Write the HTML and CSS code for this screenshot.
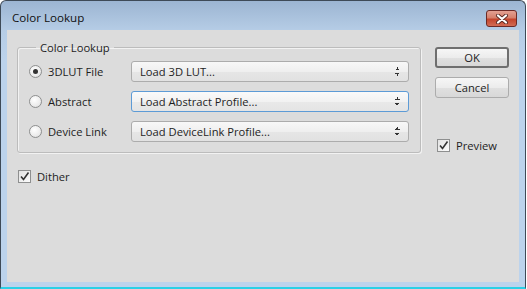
FILE: index.html
```html
<!DOCTYPE html>
<html lang="en">
<head>
    <meta charset="UTF-8">
    <title>Color Lookup</title>
    <link rel="stylesheet" href="styles.css">
</head>
<body>
    <div class="window">
        <div class="titlebar">
            <span class="title">Color Lookup</span>
            <button class="close" aria-label="Close">
                <svg width="14" height="10" viewBox="0 0 14 10">
                    <path d="M3 1.5 L11 8.5 M11 1.5 L3 8.5" stroke="#5a2a24" stroke-width="4" stroke-linecap="round"/>
                    <path d="M3 1.5 L11 8.5 M11 1.5 L3 8.5" stroke="#ffffff" stroke-width="2.2" stroke-linecap="round"/>
                </svg>
            </button>
        </div>

        <div class="client">
            <div class="main">
                <fieldset class="group">
                    <legend>Color Lookup</legend>

                    <div class="row">
                        <label class="radio-label"><span class="radio checked"></span>3DLUT File</label>
                        <div class="select">Load 3D LUT...<span class="arrows"></span></div>
                    </div>
                    <div class="row">
                        <label class="radio-label"><span class="radio"></span>Abstract</label>
                        <div class="select focused">Load Abstract Profile...<span class="arrows"></span></div>
                    </div>
                    <div class="row">
                        <label class="radio-label"><span class="radio"></span>Device Link</label>
                        <div class="select">Load DeviceLink Profile...<span class="arrows"></span></div>
                    </div>
                </fieldset>

                <div class="side">
                    <button class="btn default">OK</button>
                    <button class="btn">Cancel</button>
                    <label class="check-label preview">
                        <span class="check">
                            <svg width="11" height="11" viewBox="0 0 11 11"><path d="M2 5.5 L4.5 8.5 L9.5 1.5" fill="none" stroke="#333" stroke-width="1.6"/></svg>
                        </span>
                        Preview
                    </label>
                </div>
            </div>

            <label class="check-label dither">
                <span class="check">
                    <svg width="11" height="11" viewBox="0 0 11 11"><path d="M2 5.5 L4.5 8.5 L9.5 1.5" fill="none" stroke="#333" stroke-width="1.6"/></svg>
                </span>
                Dither
            </label>
        </div>
    </div>
</body>
</html>
```

FILE: styles.css
```css
body {
    margin: 0;
    background: #ffffff;
    font-family: 'Open Sans', 'Noto Sans', sans-serif;
    font-size: 11.2px;
    color: #1e1e1e;
}
.window {
    width: 512px;
    height: 281px;
    padding: 0 6px 5px 6px;
    border: 1px solid #3e4a57;
    border-bottom: 2px solid #2ad0e6;
    border-radius: 6px 6px 0 0;
    background: linear-gradient(to bottom, #9cb5d2 0, #b6cde6 30px, #bcd3ec 60px, #bcd3ec 100%);
}
.titlebar {
    height: 29px;
    display: flex;
    align-items: flex-start;
    justify-content: space-between;
}
.title {
    margin: 9px 0 0 5px;
    line-height: 15px;
    font-size: 11.6px;
    color: #101010;
}
.close {
    width: 31px;
    height: 17px;
    margin: 9px 2px 0 0;
    padding: 0;
    border: 1px solid #6b2a26;
    border-radius: 3px;
    background: linear-gradient(to bottom, #e3a193 0, #d6806c 45%, #c4452d 55%, #d26c55 100%);
    display: flex;
    align-items: center;
    justify-content: center;
}

.client {
    height: 252px;
    background: #dcdcdc;
    padding: 10px 10px 0 10px;
    box-sizing: border-box;
}
.main {
    display: grid;
    grid-template-columns: 404px 74px;
    column-gap: 14px;
}
.group {
    margin: 0;
    padding: 6px 10px 8px 11px;
    border: 1px solid #bcbcbc;
    border-radius: 3px;
    box-shadow: inset 1px 1px 0 #f2f2f2, 1px 1px 0 #f2f2f2;
    display: flex;
    flex-direction: column;
    gap: 9px;
}
.group legend {
    padding: 0 4px;
    margin-left: 7px;
    line-height: 15px;
}
.row {
    display: grid;
    grid-template-columns: 102px 278px;
    align-items: center;
}
.radio-label {
    display: flex;
    align-items: center;
    gap: 6px;
}
.radio {
    width: 11px;
    height: 11px;
    border: 1px solid #8e8f8f;
    border-radius: 50%;
    background: radial-gradient(circle at 40% 35%, #ffffff 0, #ececec 60%, #d6d6d6 100%);
    display: flex;
    align-items: center;
    justify-content: center;
}
.radio.checked::after {
    content: "";
    width: 5px;
    height: 5px;
    border-radius: 50%;
    background: #333333;
}
.select {
    height: 19px;
    line-height: 18px;
    padding: 0 8px;
    border: 1px solid #acacac;
    border-radius: 3px;
    background: linear-gradient(to bottom, #f8f8f8 0, #efefef 50%, #e6e6e6 51%, #e1e1e1 100%);
    display: flex;
    justify-content: space-between;
    align-items: center;
}
.select.focused {
    border-color: #5d9bd6;
    background: linear-gradient(to bottom, #fafafa 0, #f2f2f2 50%, #e9e9e9 51%, #e4e4e4 100%);
}
.arrows {
    width: 5px;
    height: 9px;
    background:
        linear-gradient(to bottom right, transparent 50%, #333 50%) 0 0 / 3px 3px no-repeat,
        linear-gradient(to bottom left, transparent 50%, #333 50%) 2px 0 / 3px 3px no-repeat,
        linear-gradient(to top right, transparent 50%, #333 50%) 0 6px / 3px 3px no-repeat,
        linear-gradient(to top left, transparent 50%, #333 50%) 2px 6px / 3px 3px no-repeat;
}

.side {
    display: flex;
    flex-direction: column;
    padding-top: 7px;
}
.btn {
    height: 21px;
    width: 74px;
    padding: 0;
    margin-bottom: 9px;
    font: inherit;
    color: #1e1e1e;
    border: 1px solid #acacac;
    border-radius: 3px;
    background: linear-gradient(to bottom, #f6f6f6 0, #ececec 50%, #e0e0e0 51%, #d8d8d8 100%);
}
.btn.default {
    border: 2px solid #6f6f6f;
}
.check-label {
    display: flex;
    align-items: center;
    gap: 6px;
}
.check {
    width: 11px;
    height: 11px;
    border: 1px solid #8e8f8f;
    background: linear-gradient(to bottom right, #e2e2e2, #fbfbfb);
    display: flex;
    align-items: center;
    justify-content: center;
}
.preview {
    margin: 31px 0 0 2px;
}
.dither {
    margin: 16px 0 0 1px;
}
```
